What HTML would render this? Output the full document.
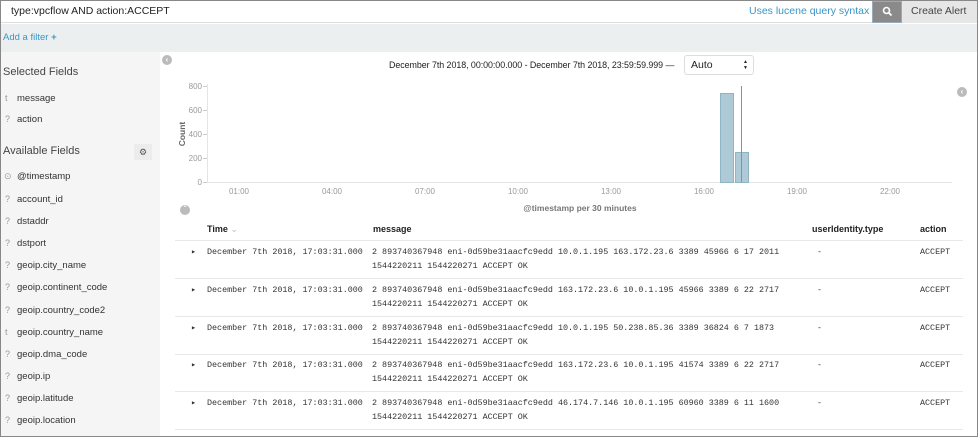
<!DOCTYPE html>
<html><head><meta charset="utf-8"><style>
*{margin:0;padding:0;box-sizing:border-box}
body{width:978px;height:437px;overflow:hidden;background:#fff;font-family:"Liberation Sans",sans-serif;position:relative;color:#333}
.a{position:absolute;white-space:nowrap}
.frame{position:absolute;left:0;top:0;width:978px;height:437px;border:1px solid #888;pointer-events:none}
.side{position:absolute;left:0;top:52px;width:160px;height:385px;background:#f5f5f5}
.fi{font-size:9.5px;color:#333}
.ic{font-size:9px;color:#999}
.mono{font-family:"Liberation Mono",monospace;font-size:8.4px;color:#333;line-height:14px}
.sep{position:absolute;left:175px;width:788px;height:1px;background:#e8e8e8}
.circ{position:absolute;width:10px;height:10px;border-radius:50%;background:#bbb;color:#fff;font-size:8px;line-height:10px;text-align:center;font-weight:bold}
</style></head><body>
<div class="a" style="left:0;top:0;width:978px;height:23px;background:#fff;border-bottom:1px solid #ddd"></div>
<div class="a" style="left:11px;top:5px;font-size:10.5px;color:#222">type:vpcflow AND action:ACCEPT</div>
<div class="a" style="left:749px;top:5px;font-size:10.5px;color:#3b95c4">Uses lucene query syntax</div>
<div class="a" style="left:872px;top:1px;width:30px;height:22px;background:#8a8a8a;border:1px solid #9ab"></div>
<svg class="a" style="left:882px;top:6px" width="11" height="11"><circle cx="4.5" cy="4.5" r="3" stroke="#fff" stroke-width="1.6" fill="none"/><line x1="6.8" y1="6.8" x2="9.5" y2="9.5" stroke="#fff" stroke-width="1.8"/></svg>
<div class="a" style="left:902px;top:0;width:76px;height:23px;background:#e6e6e6"></div>
<div class="a" style="left:911px;top:5px;font-size:10.5px;color:#444">Create Alert</div>
<div class="a" style="left:0;top:24px;width:978px;height:28px;background:#eceff0"></div>
<div class="a" style="left:3px;top:32px;font-size:9.5px;color:#3b95c4">Add a filter <b>+</b></div>
<div class="side"></div>
<div class="a" style="left:3px;top:66px;font-size:11px;color:#444">Selected Fields</div>
<div class="a ic" style="left:5px;top:93px">t</div><div class="a fi" style="left:17px;top:93px">message</div>
<div class="a ic" style="left:5px;top:114px">?</div><div class="a fi" style="left:17px;top:114px">action</div>
<div class="a" style="left:3px;top:145px;font-size:11px;color:#444">Available Fields</div>
<div class="a" style="left:134px;top:144px;width:18px;height:16px;background:#ececec;font-size:9px;text-align:center;line-height:16px;color:#555">&#9881;</div>
<div class="a ic" style="left:4px;top:171px">&#8857;</div><div class="a fi" style="left:17px;top:171px">@timestamp</div>
<div class="a ic" style="left:5px;top:194px">?</div><div class="a fi" style="left:17px;top:194px">account_id</div>
<div class="a ic" style="left:5px;top:216px">?</div><div class="a fi" style="left:17px;top:216px">dstaddr</div>
<div class="a ic" style="left:5px;top:238px">?</div><div class="a fi" style="left:17px;top:238px">dstport</div>
<div class="a ic" style="left:5px;top:260px">?</div><div class="a fi" style="left:17px;top:260px">geoip.city_name</div>
<div class="a ic" style="left:5px;top:282px">?</div><div class="a fi" style="left:17px;top:282px">geoip.continent_code</div>
<div class="a ic" style="left:5px;top:305px">?</div><div class="a fi" style="left:17px;top:305px">geoip.country_code2</div>
<div class="a ic" style="left:5px;top:327px">t</div><div class="a fi" style="left:17px;top:327px">geoip.country_name</div>
<div class="a ic" style="left:5px;top:349px">?</div><div class="a fi" style="left:17px;top:349px">geoip.dma_code</div>
<div class="a ic" style="left:5px;top:371px">?</div><div class="a fi" style="left:17px;top:371px">geoip.ip</div>
<div class="a ic" style="left:5px;top:393px">?</div><div class="a fi" style="left:17px;top:393px">geoip.latitude</div>
<div class="a ic" style="left:5px;top:415px">?</div><div class="a fi" style="left:17px;top:415px">geoip.location</div>

<div class="circ" style="left:162px;top:55px">&lsaquo;</div>
<div class="circ" style="left:957px;top:87px">&lsaquo;</div>
<div class="circ" style="left:180px;top:205px">&#710;</div>
<div class="a" style="left:389px;top:60px;font-size:8.9px;color:#222;letter-spacing:-0.05px">December 7th 2018, 00:00:00.000 - December 7th 2018, 23:59:59.999 —</div>
<div class="a" style="left:684px;top:55px;width:70px;height:20px;border:1px solid #ddd;border-radius:3px;font-size:10.5px;line-height:18px;padding-left:6px;color:#222;background:#fff">Auto</div>
<div class="a" style="left:743px;top:59px;font-size:5px;line-height:6px;color:#222">&#9650;<br>&#9660;</div>

<svg class="a" style="left:0;top:0" width="978" height="437">
<g stroke="#e4e4e4" fill="none"><line x1="207.5" y1="84" x2="207.5" y2="183"/><line x1="207" y1="182.5" x2="952" y2="182.5"/></g>
<g stroke="#ccc"><line x1="203" y1="86.5" x2="207" y2="86.5"/><line x1="203" y1="110.5" x2="207" y2="110.5"/><line x1="203" y1="134.5" x2="207" y2="134.5"/><line x1="203" y1="158.5" x2="207" y2="158.5"/><line x1="203" y1="182.5" x2="207" y2="182.5"/></g>
<g font-family="Liberation Sans" font-size="8" fill="#999" text-anchor="end"><text x="202" y="89">800</text><text x="202" y="113">600</text><text x="202" y="137">400</text><text x="202" y="161">200</text><text x="202" y="185">0</text></g>
<text x="185" y="134" transform="rotate(-90 185 134)" font-family="Liberation Sans" font-size="8.5" font-weight="bold" fill="#666" text-anchor="middle">Count</text>
<g font-family="Liberation Sans" font-size="8" fill="#999" text-anchor="middle"><text x="239" y="194">01:00</text><text x="332" y="194">04:00</text><text x="425" y="194">07:00</text><text x="518" y="194">10:00</text><text x="611" y="194">13:00</text><text x="704" y="194">16:00</text><text x="797" y="194">19:00</text><text x="890" y="194">22:00</text></g>
<rect x="720.5" y="93.5" width="13" height="89" fill="#adcad6" stroke="#8fb5c5"/>
<rect x="735.5" y="152.5" width="13" height="30" fill="#adcad6" stroke="#8fb5c5"/>
<line x1="741.5" y1="86" x2="741.5" y2="182" stroke="#e66" stroke-width="1"/>
<text x="580" y="211" font-family="Liberation Sans" font-size="8.5" font-weight="bold" fill="#777" text-anchor="middle">@timestamp per 30 minutes</text>
</svg>

<div class="a" style="left:207px;top:224px;font-size:9px;font-weight:bold;color:#222">Time <span style="color:#bbb;font-weight:normal">&#8964;</span></div>
<div class="a" style="left:373px;top:224px;font-size:9px;font-weight:bold;color:#222">message</div>
<div class="a" style="left:812px;top:224px;font-size:9px;font-weight:bold;color:#222">userIdentity.type</div>
<div class="a" style="left:920px;top:224px;font-size:9px;font-weight:bold;color:#222">action</div>
<div class="sep" style="top:240px"></div>

<div class="a mono" style="left:191px;top:245px">&#9656;</div><div class="a mono" style="left:207px;top:245px">December 7th 2018, 17:03:31.000</div>
<div class="a mono" style="left:372px;top:245px">2 893740367948 eni-0d59be31aacfc9edd 10.0.1.195 163.172.23.6 3389 45966 6 17 2011<br>1544220211 1544220271 ACCEPT OK</div>
<div class="a mono" style="left:817px;top:245px">-</div><div class="a mono" style="left:920px;top:245px">ACCEPT</div>
<div class="sep" style="top:278px"></div>

<div class="a mono" style="left:191px;top:283px">&#9656;</div><div class="a mono" style="left:207px;top:283px">December 7th 2018, 17:03:31.000</div>
<div class="a mono" style="left:372px;top:283px">2 893740367948 eni-0d59be31aacfc9edd 163.172.23.6 10.0.1.195 45966 3389 6 22 2717<br>1544220211 1544220271 ACCEPT OK</div>
<div class="a mono" style="left:817px;top:283px">-</div><div class="a mono" style="left:920px;top:283px">ACCEPT</div>
<div class="sep" style="top:316px"></div>

<div class="a mono" style="left:191px;top:321px">&#9656;</div><div class="a mono" style="left:207px;top:321px">December 7th 2018, 17:03:31.000</div>
<div class="a mono" style="left:372px;top:321px">2 893740367948 eni-0d59be31aacfc9edd 10.0.1.195 50.238.85.36 3389 36824 6 7 1873<br>1544220211 1544220271 ACCEPT OK</div>
<div class="a mono" style="left:817px;top:321px">-</div><div class="a mono" style="left:920px;top:321px">ACCEPT</div>
<div class="sep" style="top:354px"></div>

<div class="a mono" style="left:191px;top:358px">&#9656;</div><div class="a mono" style="left:207px;top:358px">December 7th 2018, 17:03:31.000</div>
<div class="a mono" style="left:372px;top:358px">2 893740367948 eni-0d59be31aacfc9edd 163.172.23.6 10.0.1.195 41574 3389 6 22 2717<br>1544220211 1544220271 ACCEPT OK</div>
<div class="a mono" style="left:817px;top:358px">-</div><div class="a mono" style="left:920px;top:358px">ACCEPT</div>
<div class="sep" style="top:391px"></div>

<div class="a mono" style="left:191px;top:396px">&#9656;</div><div class="a mono" style="left:207px;top:396px">December 7th 2018, 17:03:31.000</div>
<div class="a mono" style="left:372px;top:396px">2 893740367948 eni-0d59be31aacfc9edd 46.174.7.146 10.0.1.195 60960 3389 6 11 1600<br>1544220211 1544220271 ACCEPT OK</div>
<div class="a mono" style="left:817px;top:396px">-</div><div class="a mono" style="left:920px;top:396px">ACCEPT</div>
<div class="sep" style="top:429px"></div>

<div class="frame"></div>
</body></html>
